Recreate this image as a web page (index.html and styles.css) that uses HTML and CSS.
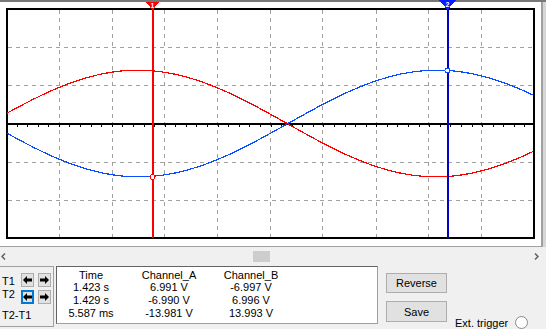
FILE: index.html
```html
<!DOCTYPE html>
<html lang="en">

<head>
    <meta charset="UTF-8">
    <meta name="viewport" content="width=device-width, initial-scale=1.0">
    <title>Oscilloscope</title>
    <link rel="stylesheet" href="styles.css">
</head>

<body>
    <main class="scope">
        <div class="top">
            <div class="screen">
                <svg width="541" height="244" viewBox="0 2 541 244">
                    <g class="grid" stroke="#a0a0a0" stroke-dasharray="4 4">
                        <line x1="59.5" y1="10" x2="59.5" y2="237" />
                        <line x1="112.5" y1="10" x2="112.5" y2="237" />
                        <line x1="164.5" y1="10" x2="164.5" y2="237" />
                        <line x1="217.5" y1="10" x2="217.5" y2="237" />
                        <line x1="270.5" y1="10" x2="270.5" y2="237" />
                        <line x1="322.5" y1="10" x2="322.5" y2="237" />
                        <line x1="376.5" y1="10" x2="376.5" y2="237" />
                        <line x1="428.5" y1="10" x2="428.5" y2="237" />
                        <line x1="481.5" y1="10" x2="481.5" y2="237" />
                        <line x1="8" y1="47.5" x2="533" y2="47.5" />
                        <line x1="8" y1="85.5" x2="533" y2="85.5" />
                        <line x1="8" y1="162.5" x2="533" y2="162.5" />
                        <line x1="8" y1="200.5" x2="533" y2="200.5" />
                    </g>
                    <line x1="6" y1="124" x2="535" y2="124" stroke="#000" stroke-width="2" />
                    <line x1="6" y1="126" x2="535" y2="126" stroke="#000" stroke-width="2" stroke-dasharray="1 9.58" />
                    <rect x="7" y="9" width="527" height="229" fill="none" stroke="#000" stroke-width="2" />

                    <g class="traces" fill="none" stroke-width="1.2"></g>

                    <!-- cursors -->
                    <line x1="153" y1="9" x2="153" y2="238" stroke="#ff0000" stroke-width="2" />
                    <line x1="448" y1="9" x2="448" y2="238" stroke="#0000c8" stroke-width="2" />
                    <polygon points="146,2 159,2 152.5,10" fill="#ff0000" />
                    <text x="152.5" y="7.5" class="flag">1</text>
                    <polygon points="439,0 456,0 447.5,10" fill="#0a1eff" />
                    <text x="447.5" y="6.5" class="flag">2</text>
                    <circle cx="152.5" cy="177" r="2.5" fill="#fff" stroke="#ff0000" />
                    <circle cx="447.5" cy="70.5" r="2.5" fill="#fff" stroke="#0a4cff" />
                </svg>
            </div>
            <div class="edge"></div>
        </div>

        <div class="scrollbar">
            <svg width="5" height="7" viewBox="0 0 5 7">
                <polyline points="4,0.5 1,3.5 4,6.5" fill="none" stroke="#606060" stroke-width="1.5" />
            </svg>
            <div class="track">
                <div class="thumb"></div>
            </div>
            <svg width="5" height="7" viewBox="0 0 5 7">
                <polyline points="1,0.5 4,3.5 1,6.5" fill="none" stroke="#606060" stroke-width="1.5" />
            </svg>
        </div>

        <div class="panel">
            <div class="cursors">
                <div class="labels">
                    <span>T1</span>
                    <span>T2</span>
                    <span class="diff">T2-T1</span>
                </div>
                <div class="steppers">
                    <button class="step">
                        <svg width="9" height="8" viewBox="0 0 9 8"><path d="M0 4L4 0V2.5H9V5.5H4V8Z" /></svg>
                    </button>
                    <button class="step">
                        <svg width="9" height="8" viewBox="0 0 9 8"><path d="M9 4L5 0V2.5H0V5.5H5V8Z" /></svg>
                    </button>
                    <button class="step focus">
                        <svg width="9" height="8" viewBox="0 0 9 8"><path d="M0 4L4 0V2.5H9V5.5H4V8Z" /></svg>
                    </button>
                    <button class="step">
                        <svg width="9" height="8" viewBox="0 0 9 8"><path d="M9 4L5 0V2.5H0V5.5H5V8Z" /></svg>
                    </button>
                </div>
            </div>

            <div class="readout">
                <div class="row"><span>Time</span><span>Channel_A</span><span>Channel_B</span></div>
                <div class="row"><span>1.423 s</span><span>6.991 V</span><span>-6.997 V</span></div>
                <div class="row"><span>1.429 s</span><span>-6.990 V</span><span>6.996 V</span></div>
                <div class="row"><span>5.587 ms</span><span>-13.981 V</span><span>13.993 V</span></div>
            </div>

            <div class="actions">
                <button class="btn">Reverse</button>
                <button class="btn save">Save</button>
            </div>

            <label class="trigger">Ext. trigger <span class="radio"></span></label>
        </div>
    </main>

    <script src="script.js"></script>
</body>

</html>
```

FILE: styles.css
```css
* {
    margin: 0;
    padding: 0;
    box-sizing: border-box;
}

body {
    font-family: "Liberation Sans", Arial, sans-serif;
    font-size: 11px;
    color: #000;
    background-color: #f0f0f0;
}

.scope {
    width: 546px;
    height: 329px;
    display: flex;
    flex-direction: column;
}

.top {
    display: flex;
    border-top: 2px solid #787878;
}

.screen {
    width: 541px;
    background-color: #fff;
    border-bottom: 1px solid #a0a0a0;
}

.screen svg {
    display: block;
    overflow: visible;
    shape-rendering: crispEdges;
}

.flag {
    font-family: "Liberation Sans", Arial, sans-serif;
    font-size: 7px;
    font-weight: bold;
    fill: #fff;
    text-anchor: middle;
}

.edge {
    width: 5px;
    background: linear-gradient(to right, #a0a0a0 2px, #d6d6d6 2px);
}

.scrollbar {
    height: 18px;
    display: flex;
    align-items: center;
    padding: 0 7px 0 1px;
}

.scrollbar svg {
    display: block;
}

.track {
    flex: 1;
    height: 11px;
}

.thumb {
    width: 17px;
    height: 11px;
    margin-left: 247px;
    background-color: #cdcdcd;
}

.panel {
    height: 64px;
    padding-top: 1px;
    display: flex;
}

.cursors {
    width: 54px;
    height: 61px;
    display: flex;
    border-top: 1px solid #a0a0a0;
    border-right: 1px solid #a0a0a0;
    border-bottom: 1px solid #a0a0a0;
}

.labels {
    width: 21px;
    padding: 8px 0 0 2px;
    display: flex;
    flex-direction: column;
    line-height: 13.3px;
    white-space: nowrap;
}

.labels .diff {
    margin-top: 7px;
}

.steppers {
    padding-top: 6px;
    display: grid;
    grid-template-columns: 13px 13px;
    grid-auto-rows: 14px;
    column-gap: 4px;
    row-gap: 3px;
    align-content: start;
}

.step {
    display: flex;
    align-items: center;
    justify-content: center;
    background-color: #e1e1e1;
    border: 1px solid #adadad;
}

.step svg {
    display: block;
    fill: #000;
}

.step.focus {
    border: 2px solid #0078d7;
}

.readout {
    width: 322px;
    height: 58px;
    margin-left: 2px;
    padding-top: 1.5px;
    background-color: #fff;
    border: 1px solid;
    border-color: #646464 #a0a0a0 #a0a0a0 #646464;
}

.row {
    display: grid;
    grid-template-columns: 68px 88px 76px;
    line-height: 12.75px;
    text-align: center;
    white-space: nowrap;
}

.actions {
    margin-left: 8px;
    padding-top: 7px;
    display: flex;
    flex-direction: column;
    gap: 8px;
}

.btn {
    width: 61px;
    height: 20px;
    font-family: inherit;
    font-size: 11px;
    color: #000;
    background-color: #e1e1e1;
    border: 1px solid #adadad;
}

.btn.save {
    height: 21px;
}

.trigger {
    margin-left: 8px;
    align-self: flex-end;
    display: flex;
    align-items: center;
    gap: 7px;
    white-space: nowrap;
}

.radio {
    width: 13px;
    height: 13px;
    border-radius: 50%;
    background-color: #fff;
    border: 1px solid #8a8a8a;
}
```

FILE: script.js
```js
// Plot the channel A and B sine traces on the scope screen
const NS = 'http://www.w3.org/2000/svg';
const traces = document.querySelector('.traces');

function addTrace(sign, cross, colour) {
    let points = [];
    for (let x = 7; x <= 533; x++) {
        let phase = Math.PI + 2 * Math.PI * (x - cross) / 597;
        let y = 123.5 - sign * 53.3 * Math.sin(phase);
        points.push(x + ',' + y.toFixed(1));
    }
    let line = document.createElementNS(NS, 'polyline');
    line.setAttribute('points', points.join(' '));
    line.setAttribute('stroke', colour);
    traces.appendChild(line);
}

addTrace(1, 287, '#ff0000');
addTrace(-1, 288, '#0a4cff');
```
